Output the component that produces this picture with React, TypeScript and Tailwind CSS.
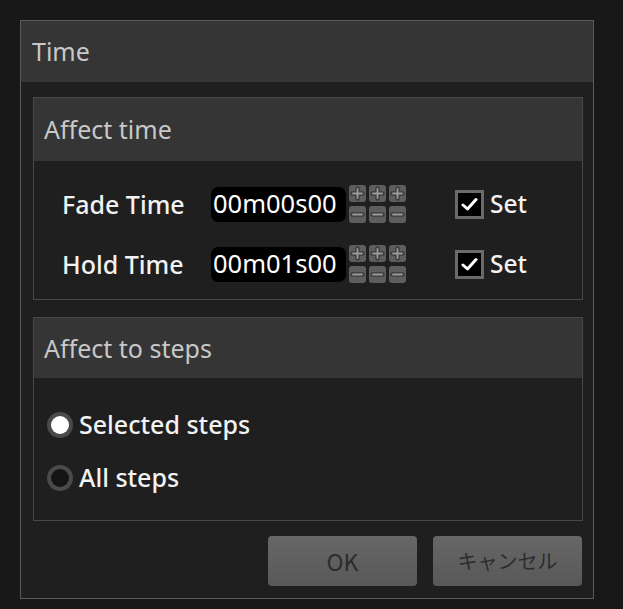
import React from "react";

const font = { fontFamily: '"Noto Sans", "Noto Sans CJK JP", sans-serif' };
const jp = { fontFamily: '"Noto Sans CJK JP", sans-serif' };

function PM({ minus }: { minus?: boolean }) {
  return (
    <div className="w-[17px] h-[17px] rounded-[3px] bg-[#5e5e5e] flex items-center justify-center">
      <svg width="15" height="15" viewBox="0 0 15 15">
        {minus ? (
          <>
            <path d="M2.5 7.5H12.5" stroke="#3c3c3c" strokeWidth="4.5" strokeLinecap="round" />
            <path d="M3 7.5H12" stroke="#9a9a9a" strokeWidth="1.8" strokeLinecap="round" />
          </>
        ) : (
          <>
            <path d="M2.5 7.5H12.5M7.5 2.5V12.5" stroke="#3c3c3c" strokeWidth="4.5" strokeLinecap="round" />
            <path d="M3 7.5H12M7.5 3V12" stroke="#9a9a9a" strokeWidth="1.8" strokeLinecap="round" />
          </>
        )}
      </svg>
    </div>
  );
}

function TimeRow({ label, value }: { label: string; value: string }) {
  return (
    <div className="h-[60px] flex items-center pl-[28px]">
      <div className="w-[149px] text-[25px] leading-none text-[#f2f2f2] font-medium">{label}</div>
      <div className="w-[135px] h-[35px] rounded-[7px] bg-black flex items-center pl-[2px] text-[25.5px] leading-none text-white">
        {value}
      </div>
      <div className="ml-[3px] flex flex-col gap-[4px]">
        <div className="flex gap-[3px]">
          <PM />
          <PM />
          <PM />
        </div>
        <div className="flex gap-[3px]">
          <PM minus />
          <PM minus />
          <PM minus />
        </div>
      </div>
      <div className="ml-[49px] w-[29px] h-[29px] border-[3px] border-[#6a6a6a] bg-black flex items-center justify-center">
        <svg width="17" height="15" viewBox="0 0 17 15">
          <path d="M2 8L6.5 12L15 2.5" stroke="#ffffff" strokeWidth="3" fill="none" strokeLinecap="round" strokeLinejoin="round" />
        </svg>
      </div>
      <div className="ml-[6px] text-[24.5px] leading-none text-[#f2f2f2] font-medium">Set</div>
    </div>
  );
}

function Radio({ checked, label }: { checked?: boolean; label: string }) {
  return (
    <div className="h-[53px] flex items-center pl-[13px]">
      <div className="w-[26px] h-[26px] rounded-full bg-[#4a4a4a] flex items-center justify-center">
        <div className={checked ? "w-[18px] h-[18px] rounded-full bg-white" : "w-[18px] h-[18px] rounded-full bg-[#141414]"} />
      </div>
      <div className="ml-[6px] text-[25px] leading-none text-[#f2f2f2] font-medium">{label}</div>
    </div>
  );
}

export default function App() {
  return (
    <div className="w-[623px] h-[609px] bg-[#181818] pt-[20px] pl-[20px]" style={font}>
      <div className="w-[574px] h-[579px] border border-[#5a5a5a] bg-[#1f1f1f] flex flex-col">
        <div className="h-[61px] bg-[#353535] flex items-center px-[11px] text-[25px] leading-none text-[#c8c8c8]">Time</div>
        <div className="pl-[12px] pr-[10px] pt-[15px] flex flex-col">
          <div className="h-[203px] border border-[#484848] bg-[#1f1f1f] flex flex-col">
            <div className="h-[63px] bg-[#353535] flex items-center px-[10px] text-[25px] leading-none text-[#c8c8c8]">Affect time</div>
            <div className="pt-[13px] flex flex-col">
              <TimeRow label="Fade Time" value="00m00s00" />
              <TimeRow label="Hold Time" value="00m01s00" />
            </div>
          </div>
          <div className="mt-[17px] h-[204px] border border-[#484848] bg-[#1f1f1f] flex flex-col">
            <div className="h-[60px] bg-[#353535] flex items-center px-[10px] text-[25px] leading-none text-[#c8c8c8]">Affect to steps</div>
            <div className="pt-[20px] flex flex-col">
              <Radio checked label="Selected steps" />
              <Radio label="All steps" />
            </div>
          </div>
          <div className="mt-[15px] flex justify-end gap-[16px] pr-[1px]">
            <div className="w-[149px] h-[50px] rounded-[4px] bg-gradient-to-b from-[#676767] to-[#585858] flex items-center justify-center text-[23px] text-[#2c2c2c]" style={jp}>OK</div>
            <div className="w-[149px] h-[50px] rounded-[4px] bg-gradient-to-b from-[#676767] to-[#585858] flex items-center justify-center text-[20px] text-[#2c2c2c]" style={jp}>キャンセル</div>
          </div>
        </div>
      </div>
    </div>
  );
}
